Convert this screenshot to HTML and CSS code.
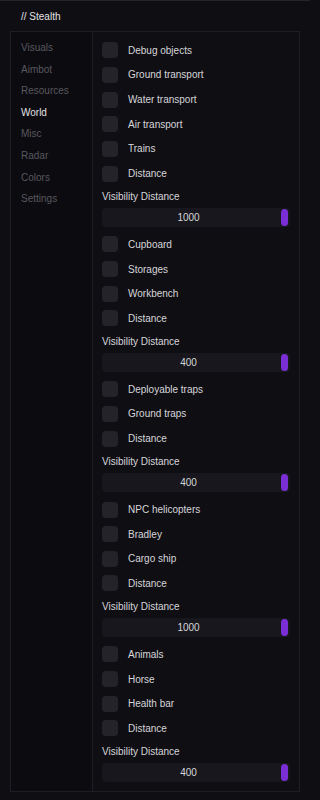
FILE: index.html
```html
<!DOCTYPE html>
<html>
<head>
<meta charset="utf-8">
<link rel="stylesheet" href="styles.css">
</head>
<body>
<div class="window">
  <div class="title">// Stealth</div>
  <div class="panel">
    <nav class="sidebar">
      <div class="nav-item">Visuals</div>
      <div class="nav-item">Aimbot</div>
      <div class="nav-item">Resources</div>
      <div class="nav-item active">World</div>
      <div class="nav-item">Misc</div>
      <div class="nav-item">Radar</div>
      <div class="nav-item">Colors</div>
      <div class="nav-item">Settings</div>
    </nav>
    <main class="content">
      <div class="check"><span class="box"></span><span>Debug objects</span></div>
      <div class="check"><span class="box"></span><span>Ground transport</span></div>
      <div class="check"><span class="box"></span><span>Water transport</span></div>
      <div class="check"><span class="box"></span><span>Air transport</span></div>
      <div class="check"><span class="box"></span><span>Trains</span></div>
      <div class="check"><span class="box"></span><span>Distance</span></div>
      <div class="slabel">Visibility Distance</div>
      <div class="slider"><span class="val">1000</span><span class="knob"></span></div>

      <div class="check"><span class="box"></span><span>Cupboard</span></div>
      <div class="check"><span class="box"></span><span>Storages</span></div>
      <div class="check"><span class="box"></span><span>Workbench</span></div>
      <div class="check"><span class="box"></span><span>Distance</span></div>
      <div class="slabel">Visibility Distance</div>
      <div class="slider"><span class="val">400</span><span class="knob"></span></div>

      <div class="check"><span class="box"></span><span>Deployable traps</span></div>
      <div class="check"><span class="box"></span><span>Ground traps</span></div>
      <div class="check"><span class="box"></span><span>Distance</span></div>
      <div class="slabel">Visibility Distance</div>
      <div class="slider"><span class="val">400</span><span class="knob"></span></div>

      <div class="check"><span class="box"></span><span>NPC helicopters</span></div>
      <div class="check"><span class="box"></span><span>Bradley</span></div>
      <div class="check"><span class="box"></span><span>Cargo ship</span></div>
      <div class="check"><span class="box"></span><span>Distance</span></div>
      <div class="slabel">Visibility Distance</div>
      <div class="slider"><span class="val">1000</span><span class="knob"></span></div>

      <div class="check"><span class="box"></span><span>Animals</span></div>
      <div class="check"><span class="box"></span><span>Horse</span></div>
      <div class="check"><span class="box"></span><span>Health bar</span></div>
      <div class="check"><span class="box"></span><span>Distance</span></div>
      <div class="slabel">Visibility Distance</div>
      <div class="slider"><span class="val">400</span><span class="knob"></span></div>
    </main>
  </div>
</div>
</body>
</html>
```

FILE: styles.css
```css
html, body {
  margin: 0;
  padding: 0;
  background: #0f0e13;
}
body {
  font-family: "Liberation Sans", Arial, sans-serif;
  font-size: 10px;
  color: #d6d6da;
}
.window {
  width: 310px;
  height: 800px;
  box-sizing: border-box;
  border-top: 1px solid #25242a;
  background: #0f0e13;
  display: flex;
  flex-direction: column;
}
.title {
  height: 30px;
  line-height: 30px;
  padding: 1px 0 0 21px;
  box-sizing: border-box;
  color: #e4e4e8;
  font-size: 10px;
}
.panel {
  margin: 0 10px;
  height: 761px;
  box-sizing: border-box;
  border: 1px solid #1f1e24;
  display: flex;
}
.sidebar {
  width: 82px;
  flex: none;
  border-right: 1px solid #1f1e24;
  background: #0c0b10;
  padding: 5px 0 0 10px;
  box-sizing: border-box;
}
.nav-item {
  height: 21.6px;
  line-height: 21.6px;
  color: #58585f;
}
.nav-item.active {
  color: #e2e2e6;
}
.content {
  flex: 1;
  padding: 6px 9px 0 9px;
  display: flex;
  flex-direction: column;
  min-width: 0;
}
.check {
  height: 24.65px;
  display: flex;
  align-items: center;
  flex: none;
}
.box {
  width: 16px;
  height: 16px;
  border-radius: 4px;
  background: #24232a;
  margin-right: 10px;
  flex: none;
}
.slabel {
  height: 20px;
  line-height: 20px;
  padding-top: 1px;
  flex: none;
  color: #d6d6da;
}
.slider {
  position: relative;
  height: 19px;
  margin: 1.3px 0 5px 0;
  background: #18171d;
  border-radius: 4px;
  text-align: center;
  line-height: 19px;
  padding-right: 15px;
  flex: none;
  color: #d6d6da;
}
.knob {
  position: absolute;
  right: 2px;
  top: 1px;
  width: 7px;
  height: 17px;
  border-radius: 4px;
  background: #7a2fd6;
}
```
